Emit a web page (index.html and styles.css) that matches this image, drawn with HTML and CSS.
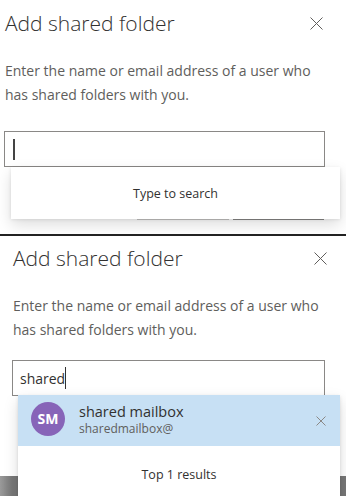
FILE: index.html
```html
<!DOCTYPE html>
<html lang="en">
<head>
    <meta charset="UTF-8">
    <title>Add shared folder</title>
    <link rel="stylesheet" href="styles.css">
</head>
<body>
    <div class="shot shot-a">
        <div class="dialog">
            <div class="dialog-head">
                <h2>Add shared folder</h2>
                <svg class="close" width="13" height="13" viewBox="0 0 13 13"><path d="M0.5 0.5L12.5 12.5M12.5 0.5L0.5 12.5" stroke="#605e5c" stroke-width="1"/></svg>
            </div>
            <p class="hint">Enter the name or email address of a user who has shared folders with you.</p>
            <div class="picker">
                <div class="field"><span class="caret thick"></span></div>
                <div class="suggest">
                    <div class="suggest-foot">Type to search</div>
                </div>
            </div>
            <div class="actions">
                <div class="btn btn-light"></div>
                <div class="btn btn-dark"></div>
            </div>
        </div>
    </div>

    <div class="shot shot-b">
        <div class="dialog">
            <div class="dialog-head">
                <h2>Add shared folder</h2>
                <svg class="close" width="13" height="13" viewBox="0 0 13 13"><path d="M0.5 0.5L12.5 12.5M12.5 0.5L0.5 12.5" stroke="#605e5c" stroke-width="1"/></svg>
            </div>
            <p class="hint">Enter the name or email address of a user who has shared folders with you.</p>
            <div class="picker">
                <div class="field">shared<span class="caret"></span></div>
                <div class="suggest">
                    <div class="persona">
                        <div class="avatar">SM</div>
                        <div class="persona-text">
                            <div class="persona-name">shared mailbox</div>
                            <div class="persona-mail">sharedmailbox@</div>
                        </div>
                        <svg class="remove" width="10" height="10" viewBox="0 0 10 10"><path d="M0.5 0.5L9.5 9.5M9.5 0.5L0.5 9.5" stroke="#8a8886" stroke-width="1"/></svg>
                    </div>
                    <div class="suggest-foot">Top 1 results</div>
                </div>
            </div>
        </div>
        <div class="backdrop"></div>
    </div>
</body>
</html>
```

FILE: styles.css
```css
body {
    margin: 0;
    background: #ffffff;
    font-family: "Open Sans", "Noto Sans", sans-serif;
    color: #323130;
}
.shot {
    overflow: hidden;
    background: #ffffff;
}
.shot-a {
    height: 234px;
    border-bottom: 2px solid #222222;
}
.shot-b {
    height: 260px;
}
.dialog {
    padding: 8px 0 0 4px;
}
.shot-b .dialog {
    padding: 7px 0 0 12px;
}
.dialog-head {
    display: flex;
    align-items: center;
    justify-content: space-between;
    width: 319px;
}
.shot-b .dialog-head {
    width: 315px;
}
.dialog-head h2 {
    margin: 0;
    font-size: 21px;
    font-weight: 300;
    line-height: 30px;
    padding-left: 1px;
}
.close {
    display: block;
}
.hint {
    margin: 21px 0 0 1px;
    font-size: 14px;
    line-height: 24px;
    color: #605e5c;
    width: 330px;
}
.picker {
    position: relative;
    margin-top: 24px;
}
.shot-b .picker {
    margin-top: 18px;
}
.field {
    box-sizing: border-box;
    width: 321px;
    height: 36px;
    border: 1px solid #8a8886;
    padding: 0 7px;
    display: flex;
    align-items: center;
    font-size: 14px;
    color: #323130;
}
.shot-b .field {
    width: 313px;
}
.caret {
    display: inline-block;
    width: 1px;
    height: 22px;
    background: #323130;
}
.caret.thick {
    width: 2px;
    height: 21px;
    margin-left: 1px;
    background: #444444;
}
.suggest {
    position: absolute;
    top: 36px;
    left: 7px;
    width: 329px;
    background: #ffffff;
    z-index: 2;
    box-shadow: 0 6.4px 14.4px rgba(0, 0, 0, 0.132), 0 1.2px 3.6px rgba(0, 0, 0, 0.108);
}
.shot-b .suggest {
    top: 35px;
    left: 6px;
    width: 322px;
}
.suggest-foot {
    height: 52px;
    display: flex;
    align-items: center;
    justify-content: center;
    font-size: 12.5px;
    color: #323130;
}
.shot-b .suggest-foot {
    height: 56px;
}
.persona {
    display: flex;
    align-items: center;
    height: 51px;
    padding: 0 14px 0 13px;
    background: #c7e0f4;
}
.avatar {
    width: 34px;
    height: 34px;
    border-radius: 50%;
    background: #8764b8;
    color: #ffffff;
    font-size: 14px;
    font-weight: 700;
    display: flex;
    align-items: center;
    justify-content: center;
    margin-top: -4px;
}
.persona-text {
    flex: 1;
    margin-left: 14px;
    margin-top: -3px;
}
.persona-name {
    font-size: 14.5px;
    line-height: 19px;
    color: #323130;
}
.persona-mail {
    font-size: 12px;
    line-height: 16px;
    color: #605e5c;
}
.remove {
    display: block;
}
.actions {
    display: flex;
    gap: 4px;
    margin: 21px 0 0 133px;
}
.btn {
    box-sizing: border-box;
    width: 92px;
    height: 32px;
    border: 1px solid #c8c6c4;
}
.btn-dark {
    width: 91px;
    border-color: #8a8886;
}
.backdrop {
    height: 40px;
    margin-top: 80px;
    background: linear-gradient(90deg, #9a9a9a, #777777 12px, #777777);
}
```
